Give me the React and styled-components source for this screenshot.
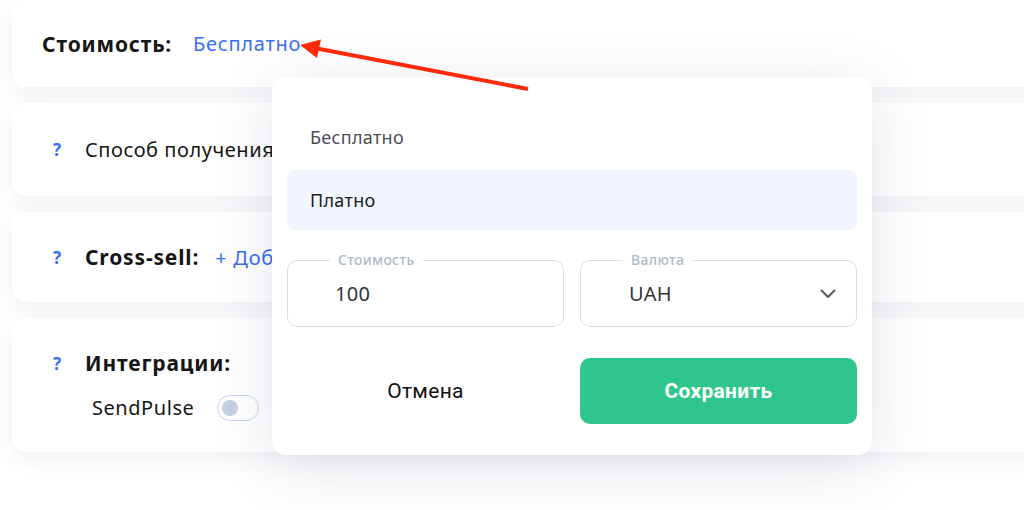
import React from "react";
import styled, { createGlobalStyle } from "styled-components";

const Global = createGlobalStyle`
  html, body { margin: 0; padding: 0; background: #ffffff; }
  body { font-family: "Noto Sans", "Inter", sans-serif; color: #1c1c1e; overflow: hidden; }
  * { box-sizing: border-box; }
`;

const Page = styled.div`
  position: relative;
  width: 1024px;
  height: 510px;
  overflow: hidden;
  background: #ffffff;
`;

const Column = styled.div`
  display: flex;
  flex-direction: column;
  gap: 16px;
  padding-left: 12px;
  width: 1060px;
`;

const Card = styled.div`
  background: #ffffff;
  border-radius: 14px;
  box-shadow: 0 6px 22px rgba(30, 50, 90, 0.075);
  height: ${(p) => p.$h}px;
  padding-left: ${(p) => p.$pl ?? 41}px;
  display: flex;
  flex-direction: column;
  justify-content: center;
  gap: 17px;
`;

const Row = styled.div`
  display: flex;
  align-items: center;
  gap: ${(p) => p.$gap ?? 21}px;
  padding-left: ${(p) => p.$pl ?? 0}px;
`;

const Help = styled.span`
  color: #3b6ef6;
  font-weight: 700;
  font-size: 17px;
  width: 9px;
`;

const Label = styled.span`
  font-size: ${(p) => (p.$bold ? 21 : 20)}px;
  letter-spacing: ${(p) => (p.$bold ? 0.85 : 0.55)}px;
  font-weight: ${(p) => (p.$bold ? 700 : 400)};
  color: #161616;
  white-space: nowrap;
`;

const Link = styled.span`
  font-size: 20px;
  letter-spacing: 0.75px;
  color: #3b6ef6;
  white-space: nowrap;
`;

const Toggle = styled.span`
  width: 42px;
  height: 26px;
  border-radius: 13px;
  border: 1.5px solid #c9d4ea;
  display: flex;
  align-items: center;
  padding-left: 4px;
  &::before {
    content: "";
    width: 16px;
    height: 16px;
    border-radius: 50%;
    background: #c5d0e4;
  }
`;

const Popup = styled.div`
  position: absolute;
  left: 272px;
  top: 77px;
  width: 600px;
  height: 378px;
  background: #ffffff;
  border-radius: 14px;
  box-shadow: 0 12px 60px rgba(30, 50, 90, 0.13);
  padding: 30px 15px;
  display: flex;
  flex-direction: column;
`;

const Options = styled.div`
  display: flex;
  flex-direction: column;
  gap: 3px;
`;

const Option = styled.div`
  height: 60px;
  display: flex;
  align-items: center;
  padding-left: 23px;
  font-size: 18px;
  letter-spacing: 0.3px;
  border-radius: 8px;
  color: ${(p) => (p.$active ? "#1c1c1e" : "#4a4e57")};
  background: ${(p) => (p.$active ? "#f0f5fe" : "transparent")};
`;

const Fields = styled.div`
  display: grid;
  grid-template-columns: 1fr 1fr;
  gap: 16px;
  margin-top: 30px;
`;

const Field = styled.div`
  position: relative;
  height: 67px;
  border: 1px solid #dddbe8;
  border-radius: 10px;
  display: flex;
  align-items: center;
  justify-content: space-between;
  padding: 0 20px 0 ${(p) => p.$pl}px;
  font-size: 20px;
  letter-spacing: 0.3px;
  color: #333333;
`;

const Legend = styled.span`
  position: absolute;
  top: -10px;
  left: 42px;
  padding: 0 8px;
  background: #ffffff;
  font-size: 14px;
  letter-spacing: 0.3px;
  font-weight: 500;
  color: #b0b9cb;
  line-height: 18px;
`;

const Actions = styled.div`
  display: grid;
  grid-template-columns: 1fr 1fr;
  gap: 16px;
  margin-top: 31px;
`;

const Button = styled.div`
  height: 66px;
  border-radius: 10px;
  display: flex;
  align-items: center;
  justify-content: center;
  font-family: "Roboto", sans-serif;
  font-size: 21px;
  letter-spacing: 0.3px;
  font-weight: ${(p) => (p.$primary ? 700 : 400)};
  color: ${(p) => (p.$primary ? "#ffffff" : "#111111")};
  background: ${(p) => (p.$primary ? "#2fc68e" : "transparent")};
`;

const ArrowLayer = styled.svg`
  position: absolute;
  left: 0;
  top: 0;
  pointer-events: none;
`;

export default function App() {
  return (
    <Page>
      <Global />
      <Column>
        <Card $h={87} $pl={30}>
          <Row>
            <Label $bold>Стоимость:</Label>
            <Link>Бесплатно</Link>
          </Row>
        </Card>
        <Card $h={93}>
          <Row $gap={23}>
            <Help>?</Help>
            <Label>Способ получения</Label>
          </Row>
        </Card>
        <Card $h={90}>
          <Row $gap={23}>
            <Help>?</Help>
            <Label $bold>Cross-sell:</Label>
            <Link style={{ marginLeft: -7 }}>+ Добавить</Link>
          </Row>
        </Card>
        <Card $h={134}>
          <Row $gap={23}>
            <Help>?</Help>
            <Label $bold>Интеграции:</Label>
          </Row>
          <Row $gap={23} $pl={39}>
            <Label>SendPulse</Label>
            <Toggle />
          </Row>
        </Card>
      </Column>

      <Popup>
        <Options>
          <Option>Бесплатно</Option>
          <Option $active>Платно</Option>
        </Options>
        <Fields>
          <Field $pl={47}>
            <Legend>Стоимость</Legend>
            <span>100</span>
          </Field>
          <Field $pl={48}>
            <Legend>Валюта</Legend>
            <span>UAH</span>
            <svg width="16" height="10" viewBox="0 0 16 10" fill="none">
              <path d="M1.5 1.5 L8 8 L14.5 1.5" stroke="#555a63" strokeWidth="2" strokeLinecap="round" strokeLinejoin="round" />
            </svg>
          </Field>
        </Fields>
        <Actions>
          <Button>Отмена</Button>
          <Button $primary>Сохранить</Button>
        </Actions>
      </Popup>

      <ArrowLayer width="1024" height="510" viewBox="0 0 1024 510">
        <line x1="317" y1="48.5" x2="528" y2="89" stroke="#ff2a0a" strokeWidth="4" />
        <polygon points="300,45 321,39.5 317,58" fill="#ff2a0a" />
      </ArrowLayer>
    </Page>
  );
}
